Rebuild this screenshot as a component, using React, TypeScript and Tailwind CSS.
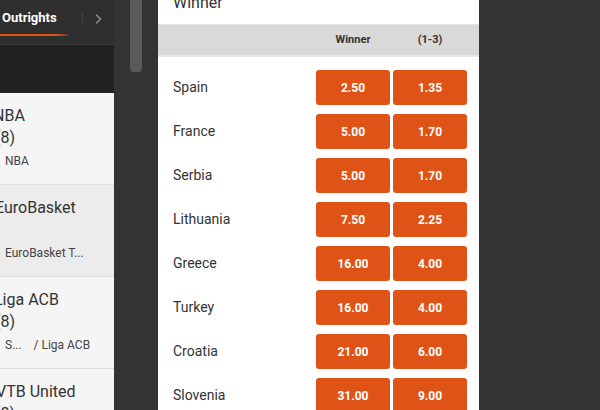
import React from 'react';

interface Competition {
  title: string;
  titleOffset: string;
  second: string;
  sub: string;
  active?: boolean;
}

const competitions: Competition[] = [
  { title: 'NBA', titleOffset: '-ml-[7px]', second: '(8)', sub: 'NBA' },
  { title: 'EuroBasket', titleOffset: '-ml-[5px]', second: '', sub: 'EuroBasket T...', active: true },
  { title: 'Liga ACB', titleOffset: '-ml-[6px]', second: '(8)', sub: 'S...    / Liga ACB' },
  { title: 'VTB United', titleOffset: '-ml-[4px]', second: '(8)', sub: 'VTB United' },
];

const odds = [
  { team: 'Spain', winner: '2.50', top3: '1.35' },
  { team: 'France', winner: '5.00', top3: '1.70' },
  { team: 'Serbia', winner: '5.00', top3: '1.70' },
  { team: 'Lithuania', winner: '7.50', top3: '2.25' },
  { team: 'Greece', winner: '16.00', top3: '4.00' },
  { team: 'Turkey', winner: '16.00', top3: '4.00' },
  { team: 'Croatia', winner: '21.00', top3: '6.00' },
  { team: 'Slovenia', winner: '31.00', top3: '9.00' },
];

const OddsButton: React.FC<{ value: string }> = ({ value }) => (
  <button className="w-[74px] h-[35px] rounded-[3px] bg-[#df5416] text-white text-[12px] font-bold flex items-center justify-center shrink-0">
    {value}
  </button>
);

const App: React.FC = () => {
  return (
    <div
      className="w-[600px] h-[410px] bg-[#333333] flex overflow-hidden"
      style={{ fontFamily: 'Roboto, "Noto Sans", Arial, sans-serif' }}
    >
      {/* left sidebar */}
      <div className="w-[114px] shrink-0 flex flex-col overflow-hidden">
        <div className="h-[45px] bg-[#2f2f2f] border-b border-[#3b3b3b] flex items-center relative shrink-0">
          <span className="ml-[2px] text-white text-[13px] font-bold leading-none -mt-[10px]">Outrights</span>
          <span className="absolute left-[82px] top-[13px] w-px h-[10px] bg-[#444]" />
          <svg className="absolute left-[93px] top-[13px]" width="10" height="12" viewBox="0 0 10 12">
            <path d="M3 1.5 L7.5 6 L3 10.5" fill="none" stroke="#8a8a8a" strokeWidth="1.6" />
          </svg>
          <span className="absolute left-0 top-[34px] w-[68px] h-[2px] bg-gradient-to-r from-[#e05515] from-80% to-[#7a3a1c]" />
        </div>
        <div className="h-[48px] bg-[#222222] shrink-0" />
        {competitions.map((c) => (
          <div
            key={c.title}
            className={`h-[92px] shrink-0 border-b border-[#dddddd] pt-[12px] text-[#333] whitespace-nowrap ${
              c.active ? 'bg-[#ececec]' : 'bg-[#f5f5f5]'
            }`}
          >
            <div className={`text-[16px] leading-[22px] ${c.titleOffset}`}>{c.title}</div>
            <div className="text-[16px] leading-[22px] -ml-[5px] h-[22px]">{c.second}</div>
            <div className="mt-[4px] ml-[5px] text-[12px] leading-[16px] text-[#444] whitespace-pre">{c.sub}</div>
          </div>
        ))}
      </div>

      {/* scroll gutter */}
      <div className="w-[44px] shrink-0 pl-[16px]">
        <div className="w-[12px] h-[72px] bg-[#5a5a5a] rounded-b-[3px]" />
      </div>

      {/* market panel */}
      <div className="w-[321px] shrink-0 bg-white flex flex-col overflow-hidden">
        <div className="h-[24px] shrink-0 overflow-hidden pl-[15px]">
          <div className="text-[16px] leading-[16px] text-[#333] -mt-[5px]">Winner</div>
        </div>
        <div className="h-[33px] shrink-0 bg-[#d9d9d9] border-t border-[#e3e3e3] border-b-[2px] border-b-[#e8e8e8] flex items-center justify-end pr-[12px] gap-[3px] pt-[1px]">
          <div className="w-[74px] text-center text-[11px] font-bold text-[#333]">Winner</div>
          <div className="w-[74px] text-center text-[11px] font-bold text-[#333]">(1-3)</div>
        </div>
        <div className="pt-[13px] flex flex-col gap-[9px] shrink-0">
          {odds.map((o) => (
            <div key={o.team} className="flex items-center pl-[15px] pr-[12px] h-[35px] shrink-0">
              <span className="flex-1 text-[14px] text-[#333]">{o.team}</span>
              <div className="flex gap-[3px]">
                <OddsButton value={o.winner} />
                <OddsButton value={o.top3} />
              </div>
            </div>
          ))}
        </div>
      </div>

      <div className="flex-1" />
    </div>
  );
};

export default App;
